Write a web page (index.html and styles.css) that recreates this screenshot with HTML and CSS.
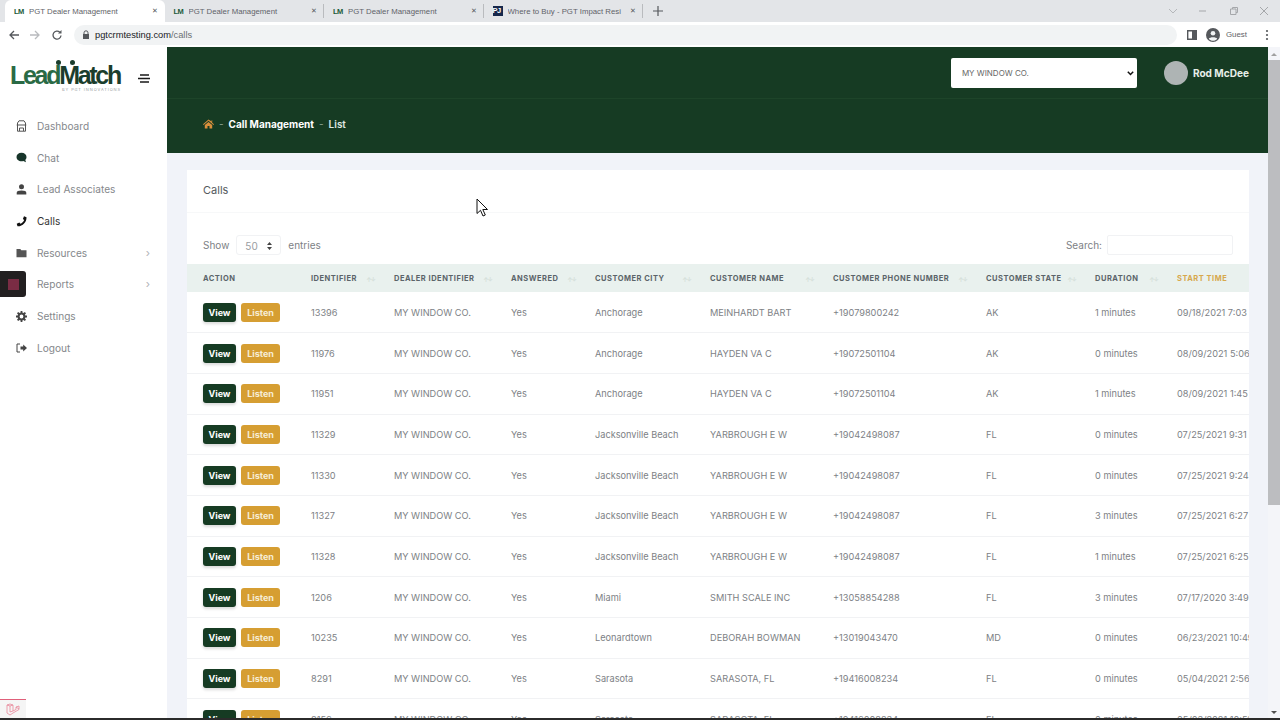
FILE: index.html
```html
<!DOCTYPE html>
<html lang="en">
<head>
<meta charset="UTF-8">
<title>PGT Dealer Management</title>
<link rel="stylesheet" href="styles.css">
</head>
<body>
<div class="tab-strip">
  <div class="tab active"><span class="favicon">LM</span><span class="tab-title">PGT Dealer Management</span><span class="tab-close">&#10005;</span></div>
  <div class="tab"><span class="favicon">LM</span><span class="tab-title">PGT Dealer Management</span><span class="tab-close">&#10005;</span></div>
  <div class="tab"><span class="favicon">LM</span><span class="tab-title">PGT Dealer Management</span><span class="tab-close">&#10005;</span></div>
  <div class="tab"><span class="favicon navy">PJ</span><span class="tab-title">Where to Buy - PGT Impact Resi</span><span class="tab-close">&#10005;</span></div>
  <svg class="new-tab" width="10" height="10" viewBox="0 0 10 10"><path d="M5 0v10M0 5h10" stroke="#55585c" stroke-width="1.2"/></svg>
  <div class="window-controls">
    <svg width="10" height="10" viewBox="0 0 10 10"><path d="M1 3l4 4 4-4" fill="none" stroke="#b5b7ba"/></svg>
    <svg width="10" height="10" viewBox="0 0 10 10"><path d="M1 5h7" stroke="#a5a7aa"/></svg>
    <svg width="10" height="10" viewBox="0 0 10 10"><path d="M1.500 3h5.500v5.500h-5.500zM3.500 3v-1.500h5v5h-1.500" fill="none" stroke="#a5a7aa"/></svg>
    <svg width="10" height="10" viewBox="0 0 10 10"><path d="M1 1l8 8M9 1l-8 8" stroke="#a5a7aa"/></svg>
  </div>
</div>
<div class="toolbar">
  <svg width="12" height="12" viewBox="0 0 12 12"><path d="M11 6H2M6 2L2 6l4 4" fill="none" stroke="#55585c" stroke-width="1.300"/></svg>
  <svg width="12" height="12" viewBox="0 0 12 12"><path d="M1 6h9M6 2l4 4-4 4" fill="none" stroke="#b9bbbe" stroke-width="1.300"/></svg>
  <svg class="reload" width="12" height="12" viewBox="0 0 12 12"><path d="M10 6.500A4 4 0 1 1 8.800 3.200" fill="none" stroke="#55585c" stroke-width="1.300"/><path d="M10.500 1v3.500H7z" fill="#55585c"/></svg>
  <div class="omnibox">
    <svg width="8" height="9" viewBox="0 0 8 9"><path d="M2 4V2.800a2 2 0 0 1 4 0V4" fill="none" stroke="#55585c"/><rect x="1" y="4" width="6" height="5" fill="#55585c"/></svg>
    <span class="url">pgtcrmtesting.com<span class="url-path">/calls</span></span>
  </div>
  <svg class="side-panel" width="10" height="10" viewBox="0 0 10 10"><path d="M.700.700h8.600v8.600H.700z" fill="none" stroke="#55585c" stroke-width="1.400"/><rect x="5" y="1" width="4" height="8" fill="#55585c"/></svg>
  <div class="profile">
    <svg width="14" height="14" viewBox="0 0 14 14"><circle cx="7" cy="7" r="7" fill="#55585c"/><circle cx="7" cy="5.200" r="2.300" fill="#f1f3f4"/><path d="M2.800 10.800c1-2 7.400-2 8.400 0-1.200 1.400-2.600 2-4.200 2s-3-.6-4.200-2z" fill="#f1f3f4"/></svg>
    <span>Guest</span>
  </div>
  <svg class="chrome-menu" width="4" height="12" viewBox="0 0 4 12"><circle cx="2" cy="2" r="1.100" fill="#55585c"/><circle cx="2" cy="6" r="1.100" fill="#55585c"/><circle cx="2" cy="10" r="1.100" fill="#55585c"/></svg>
</div>
<div class="app">
  <aside class="sidebar">
    <div class="brand">
      <div class="logo">
        <span class="logo-dot first"></span>
        <span class="logo-dot second"></span>
        <span class="logo-word"><span class="logo-lead">Lead</span>Match</span>
        <span class="logo-sub">BY PGT INNOVATIONS</span>
      </div>
      <svg class="burger" width="12" height="10" viewBox="0 0 12 10"><path d="M2 1h9M0 4.500h12M2 8h9" stroke="#1a1a1a" stroke-width="1.300"/></svg>
    </div>
    <nav class="nav">
      <a class="nav-item"><svg width="11" height="12" viewBox="0 0 11 12"><path d="M1.500 5V3L3 .8h5L9.500 3v2M.7 5h9.600M1.500 5v6.200h8V5M3.500 11V8h4v3" fill="none" stroke="#555" stroke-width="1"/></svg>Dashboard</a>
      <a class="nav-item"><svg width="11" height="11" viewBox="0 0 11 11"><path d="M5.500.8c2.900 0 5 1.800 5 4.200 0 1.200-.5 2.200-1.200 3l.7 2.300-2.700-1.200c-.6.200-1.200.200-1.800.200-2.900 0-5-1.900-5-4.300S2.600.8 5.500.8z" fill="#17352a"/></svg>Chat</a>
      <a class="nav-item"><svg width="11" height="11" viewBox="0 0 11 11"><circle cx="5.500" cy="2.800" r="2.500" fill="#444"/><path d="M.700 10.500V8.700c0-1.500 1.500-2.300 4.800-2.300s4.800.8 4.800 2.300v1.800z" fill="#444"/></svg>Lead Associates</a>
      <a class="nav-item current"><svg width="11" height="11" viewBox="0 0 11 11"><path d="M10.500 1.200L8 .3 6.900 3l1.300 1c-.7 1.600-2.200 3.100-3.800 3.800l-1-1.300L.7 7.700l.8 2.600c4.900.3 9.300-4.200 9-9.100z" fill="#111"/></svg>Calls</a>
      <a class="nav-item has-arrow"><svg width="11" height="10" viewBox="0 0 11 10"><path d="M.5 1h3.800l1 1.200h5.200v7H.5z" fill="#555"/></svg>Resources<span class="nav-arrow">&#8250;</span></a>
      <a class="nav-item has-arrow"><span class="recorder-tile"><span></span></span>Reports<span class="nav-arrow">&#8250;</span></a>
      <a class="nav-item"><svg width="11" height="11" viewBox="0 0 11 11"><circle cx="5.500" cy="5.500" r="2.900" fill="none" stroke="#444" stroke-width="2"/><path d="M5.500 0v2M5.500 9v2M0 5.500h2M9 5.500h2M1.600 1.600L3 3M8 8l1.400 1.400M9.400 1.600L8 3M3 8L1.600 9.400" stroke="#444" stroke-width="1.800"/></svg>Settings</a>
      <a class="nav-item"><svg width="11" height="10" viewBox="0 0 11 10"><path d="M4 1H1v8h3" fill="none" stroke="#444"/><path d="M4.500 3.600h2.700V1.500L11 5 7.200 8.500V6.400H4.500z" fill="#444"/></svg>Logout</a>
    </nav>
    <div class="laravel-tile">
      <svg width="14" height="14" viewBox="0 0 14 14"><path d="M1 2l3-1 3 1v6l3-1.500V4l3-1v3.500l-6 3.500-3 2-3-2zM4 3v6M7 8L4 9M10 4l3 2M1 2l3 1 3-1" fill="none" stroke="#e8889a" stroke-width=".8"/></svg>
    </div>
  </aside>
  <main class="main">
    <header class="hero">
      <div class="hero-top">
        <div class="dealer-select">
          <span>MY WINDOW CO.</span>
          <svg width="7" height="5" viewBox="0 0 7 5"><path d="M.8.800L3.500 3.500 6.200.8" fill="none" stroke="#111" stroke-width="1.500"/></svg>
        </div>
        <div class="user">
          <span class="avatar"></span>
          <span class="user-name">Rod McDee</span>
        </div>
      </div>
      <div class="breadcrumb">
        <svg width="11" height="10" viewBox="0 0 11 10"><path d="M5.500.5L0 5.200l.6.700 4.900-4.100 4.900 4.100.6-.7-1.800-1.500V1H8.700v1.500zM1.800 6L5.500 3l3.700 3v3.500H6.500V7h-2v2.500H1.800z" fill="#d98f3c"/></svg>
        <span class="crumb-sep">-</span>
        <span class="crumb-strong">Call Management</span>
        <span class="crumb-sep">-</span>
        <span class="crumb-last">List</span>
      </div>
    </header>
    <section class="card">
      <div class="card-header">Calls</div>
      <div class="table-controls">
        <div class="length">Show <span class="length-select"><span>50</span><svg width="5" height="8" viewBox="0 0 5 8"><path d="M2.500 0L5 3H0zM2.500 8L0 5h5z" fill="#444"/></svg></span> entries</div>
        <div class="search">Search: <span class="search-input"></span></div>
      </div>
      <table class="calls">
        <colgroup>
          <col class="c-action"><col class="c-id"><col class="c-dealer"><col class="c-answered"><col class="c-city"><col class="c-name"><col class="c-phone"><col class="c-state"><col class="c-duration"><col class="c-start">
        </colgroup>
        <thead>
          <tr>
            <th>ACTION</th>
            <th class="sort">IDENTIFIER</th>
            <th class="sort">DEALER IDENTIFIER</th>
            <th class="sort">ANSWERED</th>
            <th class="sort">CUSTOMER CITY</th>
            <th class="sort">CUSTOMER NAME</th>
            <th class="sort">CUSTOMER PHONE NUMBER</th>
            <th class="sort">CUSTOMER STATE</th>
            <th class="sort">DURATION</th>
            <th class="sorted">START TIME</th>
          </tr>
        </thead>
        <tbody id="rows"></tbody>
      </table>
    </section>
  </main>
  <div class="scrollbar">
    <span class="scroll-up"></span>
    <span class="scroll-thumb"></span>
    <span class="scroll-down"></span>
  </div>
</div>
<div class="bottom-line"></div>
<svg class="cursor" width="13" height="19" viewBox="0 0 13 19"><path d="M1 1v14.500l3.500-3.200 2.500 5.700 2.300-1-2.500-5.500h4.700z" fill="#fff" stroke="#111" stroke-width="1"/></svg>
<script>
  var data = [
    ['13396', 'Anchorage', 'MEINHARDT BART', '+19079800242', 'AK', '1 minutes', '09/18/2021 7:03 AM'],
    ['11976', 'Anchorage', 'HAYDEN VA C', '+19072501104', 'AK', '0 minutes', '08/09/2021 5:06 PM'],
    ['11951', 'Anchorage', 'HAYDEN VA C', '+19072501104', 'AK', '1 minutes', '08/09/2021 1:45 PM'],
    ['11329', 'Jacksonville Beach', 'YARBROUGH E W', '+19042498087', 'FL', '0 minutes', '07/25/2021 9:31 AM'],
    ['11330', 'Jacksonville Beach', 'YARBROUGH E W', '+19042498087', 'FL', '0 minutes', '07/25/2021 9:24 AM'],
    ['11327', 'Jacksonville Beach', 'YARBROUGH E W', '+19042498087', 'FL', '3 minutes', '07/25/2021 6:27 AM'],
    ['11328', 'Jacksonville Beach', 'YARBROUGH E W', '+19042498087', 'FL', '1 minutes', '07/25/2021 6:25 AM'],
    ['1206', 'Miami', 'SMITH SCALE INC', '+13058854288', 'FL', '3 minutes', '07/17/2020 3:49 PM'],
    ['10235', 'Leonardtown', 'DEBORAH BOWMAN', '+13019043470', 'MD', '0 minutes', '06/23/2021 10:49 AM'],
    ['8291', 'Sarasota', 'SARASOTA, FL', '+19416008234', 'FL', '0 minutes', '05/04/2021 2:56 PM'],
    ['8156', 'Sarasota', 'SARASOTA, FL', '+19416008234', 'FL', '0 minutes', '05/03/2021 10:51 AM']
  ];
  var html = '';
  data.forEach(function(r) {
    html += '<tr><td class="actions"><button class="btn-view">View</button><button class="btn-listen">Listen</button></td>' +
      '<td>' + r[0] + '</td><td>MY WINDOW CO.</td><td>Yes</td><td>' + r[1] + '</td><td>' + r[2] + '</td><td>' + r[3] + '</td>' +
      '<td>' + r[4] + '</td><td>' + r[5] + '</td><td>' + r[6] + '</td></tr>';
  });
  document.getElementById('rows').innerHTML = html;
</script>
</body>
</html>
```

FILE: styles.css
```css
* {
    box-sizing: border-box;
}
html, body {
    height: 720px;
}
body {
    margin: 0;
    overflow: hidden;
    display: flex;
    flex-direction: column;
    font-family: Inter, "Liberation Sans", sans-serif;
    background-color: #fff;
    position: relative;
}
.tab-strip {
    height: 22px;
    flex: none;
    display: flex;
    align-items: center;
    background-color: #e3e5e8;
    padding-left: 5px;
}
.tab {
    width: 159.500px;
    height: 22px;
    display: flex;
    align-items: center;
    padding: 0 7px 0 9px;
    font-family: "Liberation Sans", sans-serif;
    font-size: 7.800px;
    color: #5f6368;
    position: relative;
}
.tab:not(.active)::after {
    content: "";
    position: absolute;
    right: 0;
    top: 4px;
    bottom: 4px;
    width: 1px;
    background-color: #b9bbbe;
}
.tab.active {
    background-color: #fff;
    border-radius: 6px 6px 0 0;
}
.favicon {
    width: 10px;
    flex: none;
    font-size: 7.500px;
    font-weight: bold;
    letter-spacing: -.5px;
    color: #1d5c3a;
}
.favicon.navy {
    background-color: #16284c;
    color: #fff;
    height: 10px;
    line-height: 10px;
}
.tab-title {
    flex: 1;
    min-width: 0;
    margin-left: 5px;
    white-space: nowrap;
    overflow: hidden;
}
.tab-close {
    font-size: 7px;
    color: #55585c;
    margin-left: 4px;
}
.new-tab {
    margin-left: 10px;
}
.window-controls {
    margin-left: auto;
    display: flex;
    gap: 20.500px;
    padding-right: 11px;
}
.toolbar {
    height: 25px;
    flex: none;
    display: flex;
    align-items: center;
    gap: 9px;
    padding: 0 11px 0 8px;
    background-color: #fff;
}
.reload {
    margin-left: 1px;
}
.omnibox {
    flex: 1;
    height: 20px;
    margin-left: 2px;
    display: flex;
    align-items: center;
    gap: 5px;
    padding-left: 8px;
    background-color: #f1f3f4;
    border-radius: 10px;
    font-family: "Liberation Sans", sans-serif;
    font-size: 9.300px;
    color: #202124;
}
.url-path {
    color: #6b6f73;
}
.side-panel {
    margin-left: 1px;
}
.profile {
    display: flex;
    align-items: center;
    gap: 6px;
    font-family: "Liberation Sans", sans-serif;
    font-size: 7.900px;
    color: #5f6368;
    margin-right: 9px;
}
.app {
    flex: 1;
    min-height: 0;
    display: flex;
}
.sidebar {
    width: 167px;
    flex: none;
    background-color: #fff;
    display: flex;
    flex-direction: column;
    position: relative;
}
.brand {
    height: 63.200px;
    display: flex;
    align-items: center;
    justify-content: space-between;
    padding: 0 17px 0 10px;
}
.logo {
    width: 111px;
    display: flex;
    flex-direction: column;
    align-items: flex-end;
    margin-top: -1px;
    position: relative;
}
.logo-dot {
    position: absolute;
    top: -4px;
    width: 5px;
    height: 5px;
    border-radius: 50%;
    background-color: #1b3d2c;
}
.logo-dot.first {
    left: 46px;
}
.logo-dot.second {
    left: 60px;
}
.logo-word {
    width: 100%;
    font-family: "Liberation Sans", sans-serif;
    font-size: 25px;
    font-weight: bold;
    letter-spacing: -2.300px;
    line-height: 23px;
    white-space: nowrap;
    color: #1b3d2c;
}
.logo-lead {
    color: #2a6a45;
}
.logo-sub {
    font-size: 4px;
    letter-spacing: .9px;
    color: #9aa0a3;
    line-height: 5px;
    white-space: nowrap;
}
.nav {
    display: flex;
    flex-direction: column;
}
.nav-item {
    height: 31.700px;
    display: flex;
    align-items: center;
    gap: 10px;
    padding-left: 16px;
    font-size: 10.100px;
    color: #85888c;
}
.nav-item svg {
    flex: none;
    width: 11px;
}
.nav-item.current {
    color: #333;
}
.nav-arrow {
    margin-left: auto;
    margin-right: 17px;
    color: #b0b3b6;
    font-size: 11px;
}
.recorder-tile {
    width: 26px;
    height: 26px;
    margin: 0 1px 0 -16px;
    flex: none;
    display: flex;
    align-items: center;
    justify-content: center;
    background-color: #221f20;
    border-radius: 0 3px 3px 0;
}
.recorder-tile span {
    width: 11px;
    height: 11px;
    background-color: #7a2c44;
}
.laravel-tile {
    position: absolute;
    left: 0;
    bottom: 0;
    width: 26px;
    height: 21px;
    display: flex;
    align-items: center;
    justify-content: center;
    background-color: #f5f5f5;
    border-top: 1px solid #e0607a;
}
.main {
    flex: 1;
    min-width: 0;
    background-color: #f1f3f9;
    overflow: hidden;
    display: flex;
    flex-direction: column;
}
.hero {
    height: 106px;
    flex: none;
    background-color: #163b23;
}
.hero-top {
    height: 52px;
    display: flex;
    align-items: flex-start;
    justify-content: flex-end;
    padding: 11px 19px 0 0;
    border-bottom: 1px solid #1d4429;
}
.dealer-select {
    width: 186px;
    height: 30px;
    display: flex;
    align-items: center;
    justify-content: space-between;
    padding: 0 3px 0 11px;
    background-color: #fff;
    border-radius: 2px;
    font-size: 8px;
    color: #666;
}
.user {
    display: flex;
    align-items: center;
    gap: 5px;
    height: 30px;
    margin-left: 27px;
}
.avatar {
    width: 24px;
    height: 24px;
    border-radius: 50%;
    background-color: #aeb4b4;
}
.user-name {
    font-size: 10.100px;
    font-weight: 700;
    color: #e6eee8;
}
.breadcrumb {
    display: flex;
    align-items: center;
    gap: 5px;
    padding: 19px 0 0 36px;
    font-size: 10px;
    color: #dfe7e1;
}
.crumb-strong {
    font-weight: 700;
    color: #fff;
}
.crumb-last {
    font-weight: 600;
}
.crumb-sep {
    color: #8ea596;
}
.card {
    flex: 1;
    margin: 17px 19px 0 20px;
    background-color: #fff;
    overflow: hidden;
}
.card-header {
    height: 43px;
    padding: 13px 0 0 16px;
    font-size: 11px;
    color: #555b5e;
    border-bottom: 1px solid #f7f8f9;
}
.table-controls {
    height: 51px;
    display: flex;
    justify-content: space-between;
    align-items: flex-end;
    padding: 0 16px 9px;
    font-size: 10px;
    color: #7d8185;
}
.length {
    display: flex;
    align-items: center;
    gap: 7px;
}
.length-select {
    width: 45px;
    height: 20px;
    display: flex;
    align-items: center;
    justify-content: space-between;
    padding: 2px 8px 0 8px;
    border: 1px solid #f1f2f4;
    border-radius: 3px;
    color: #999da1;
}
.search {
    display: flex;
    align-items: center;
    gap: 5px;
}
.search-input {
    width: 126px;
    height: 20px;
    border: 1px solid #f1f2f4;
    border-radius: 2px;
}
.calls {
    width: 1262px;
    table-layout: fixed;
    border-collapse: collapse;
}
.c-action { width: 108px; }
.c-id { width: 83px; }
.c-dealer { width: 117px; }
.c-answered { width: 84px; }
.c-city { width: 115px; }
.c-name { width: 123px; }
.c-phone { width: 153px; }
.c-state { width: 109px; }
.c-duration { width: 82px; }
.c-start { width: 288px; }
.calls th {
    height: 28px;
    padding: 0 0 0 16px;
    text-align: left;
    background-color: #e9f1ee;
    font-size: 7.500px;
    font-weight: 700;
    letter-spacing: .5px;
    color: #5b6469;
    white-space: nowrap;
    position: relative;
}
.calls th.sort::after {
    content: "\2191\2193";
    position: absolute;
    right: 3px;
    top: 12px;
    font-size: 6px;
    letter-spacing: -1px;
    color: #d5dfda;
}
.calls th.sorted {
    color: #d7a84d;
}
.calls td {
    height: 40.700px;
    padding: 0 0 0 16px;
    font-size: 9.200px;
    color: #7d8185;
    white-space: nowrap;
    overflow: hidden;
    border-bottom: 1px solid #f1f2f4;
}
.calls td.actions {
    overflow: visible;
}
.btn-view, .btn-listen {
    height: 19px;
    border: none;
    border-radius: 3px;
    font-family: inherit;
    font-size: 9px;
    font-weight: 700;
    padding: 0;
}
.btn-view {
    width: 33px;
    background-color: #163b23;
    color: #fff;
    box-shadow: 0 2px 3px rgba(0, 0, 0, .15);
}
.btn-listen {
    width: 39px;
    margin-left: 5px;
    background-color: #d69e32;
    color: #f7edd6;
}
.scrollbar {
    width: 12px;
    flex: none;
    display: flex;
    flex-direction: column;
    align-items: center;
    background-color: #f4f5f9;
}
.scroll-up, .scroll-down {
    width: 0;
    height: 0;
    border-left: 3px solid transparent;
    border-right: 3px solid transparent;
    flex: none;
}
.scroll-up {
    margin: 6px 0 4px;
    border-bottom: 3px solid #a0a0a0;
}
.scroll-thumb {
    width: 100%;
    height: 445px;
    flex: none;
    margin-bottom: auto;
    background-color: #bcbdc0;
}
.scroll-down {
    margin: 0 0 6px;
    border-top: 3px solid #505050;
}
.bottom-line {
    position: absolute;
    left: 0;
    right: 0;
    bottom: 0;
    height: 2px;
    background-color: #2b2b2b;
}
.cursor {
    position: absolute;
    left: 476px;
    top: 198px;
}
```
